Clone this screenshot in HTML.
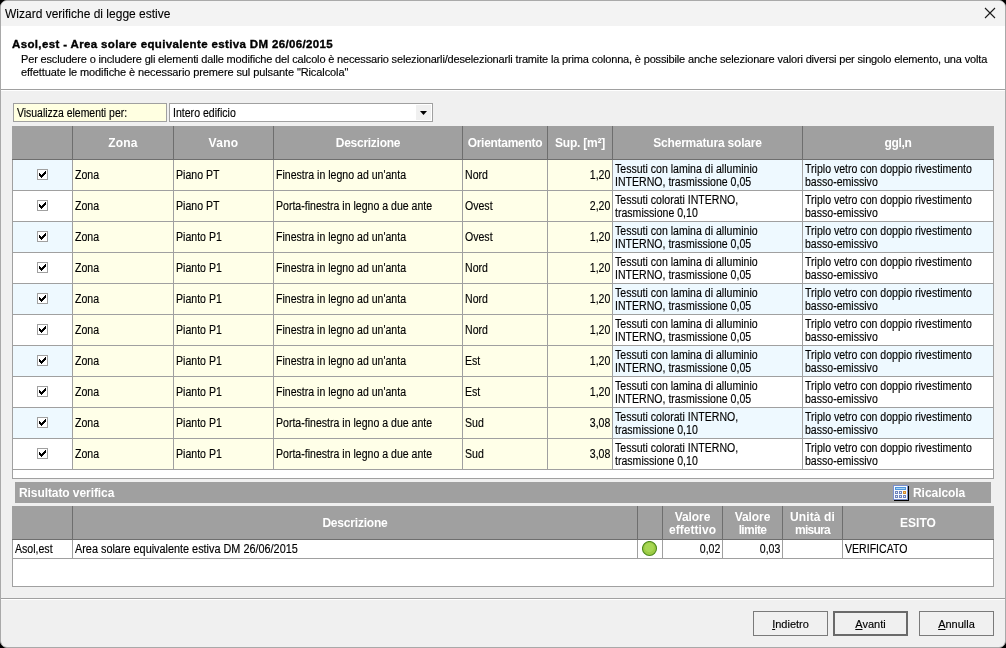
<!DOCTYPE html>
<html><head><meta charset="utf-8"><style>
html,body{margin:0;padding:0;width:1006px;height:648px;overflow:hidden;background:#000;}
.t,.tb,.tt,.hb,.hh,.hh2,.hb2,.bt{will-change:transform;}
body>div,body>svg,#w div{position:absolute;}
div{position:absolute;box-sizing:content-box;}
.t,.tb,.tt,.hb,.hh,.hh2,.hb2,.bt{font-family:"Liberation Sans", sans-serif;white-space:nowrap;color:#000;}
.t{font-size:11px;line-height:13px;letter-spacing:-0.15px;-webkit-text-stroke:0.15px #000;}
.tb{font-size:12px;line-height:13px;-webkit-text-stroke:0.15px #000;}
.tt{font-size:12px;line-height:16px;color:#000;-webkit-text-stroke:0.1px #000;}
.hb{font-size:11.5px;line-height:14px;font-weight:bold;letter-spacing:0.36px;-webkit-text-stroke:0.35px #000;}
.hh{font-size:12px;line-height:14px;font-weight:bold;color:#fff;letter-spacing:-0.15px;}
.hh2{font-size:12px;line-height:13px;font-weight:bold;color:#fff;letter-spacing:-0.15px;}
.hb2{font-size:12px;line-height:14px;font-weight:bold;color:#fff;letter-spacing:0px;}
.bt{font-size:11px;line-height:13px;color:#000;-webkit-text-stroke:0.15px #000;}
u{text-decoration:underline;text-underline-offset:1px;}
</style></head><body>
<div style="left:0;top:0;width:1004px;height:646px;border:1px solid #a9a9a9;border-radius:7px;background:#f0f0f0;overflow:hidden">
</div>
<div style="left:1px;top:1px;width:1004px;height:25px;background:#f3f3f3;border-radius:6px 6px 0 0;"></div>
<div class="tt" style="left:5px;top:6px;">Wizard verifiche di legge estive</div>
<svg style="position:absolute;left:984px;top:7px" width="12" height="12" viewBox="0 0 12 12"><path d="M1 1L11 11M11 1L1 11" stroke="#1a1a1a" stroke-width="1.1" fill="none"/></svg>
<div style="left:1px;top:26px;width:1004px;height:63px;background:#ffffff;"></div>
<div style="left:1px;top:89px;width:1004px;height:1px;background:#a0a0a0;"></div>
<div style="left:1px;top:90px;width:1004px;height:1px;background:#ffffff;"></div>
<div class="hb" style="left:12px;top:37px;">Asol,est - Area solare equivalente estiva DM 26/06/2015</div>
<div class="t" style="left:21px;top:53px;letter-spacing:-0.16px">Per escludere o includere gli elementi dalle modifiche del calcolo è necessario selezionarli/deselezionarli tramite la prima colonna, è possibile anche selezionare valori diversi per singolo elemento, una volta</div>
<div class="t" style="left:21px;top:66px;letter-spacing:-0.1px">effettuate le modifiche è necessario premere sul pulsante "Ricalcola"</div>
<div style="left:13px;top:103px;width:152px;height:17px;background:#ffffe1;border:1px solid #a0a0a0;"></div>
<div class="tb" style="left:17px;top:107px;"><span style="display:inline-block;transform:scaleX(0.87);transform-origin:0 0">Visualizza elementi per:</span></div>
<div style="left:169px;top:103px;width:262px;height:17px;background:#ffffff;border:1px solid #a0a0a0;"></div>
<div class="tb" style="left:173px;top:107px;"><span style="display:inline-block;transform:scaleX(0.88);transform-origin:0 0">Intero edificio</span></div>
<div style="left:416px;top:105px;width:15px;height:15px;background:#f0f0f0;"></div>
<svg style="position:absolute;left:420px;top:111px" width="7" height="4" viewBox="0 0 7 4"><path d="M0 0H7L3.5 4Z" fill="#000"/></svg>
<div style="left:12px;top:126px;width:982px;height:353px;background:#ffffff;box-sizing:border-box;border:1px solid #a0a0a0;border-top:none;"></div>
<div style="left:12px;top:126px;width:982px;height:33px;background:#a0a0a0;"></div>
<div style="left:12px;top:159px;width:982px;height:1px;background:#6e6e6e;"></div>
<div style="left:72px;top:126px;width:1px;height:33px;background:#6e6e6e;"></div>
<div style="left:173px;top:126px;width:1px;height:33px;background:#6e6e6e;"></div>
<div style="left:273px;top:126px;width:1px;height:33px;background:#6e6e6e;"></div>
<div style="left:462px;top:126px;width:1px;height:33px;background:#6e6e6e;"></div>
<div style="left:547px;top:126px;width:1px;height:33px;background:#6e6e6e;"></div>
<div style="left:612px;top:126px;width:1px;height:33px;background:#6e6e6e;"></div>
<div style="left:802px;top:126px;width:1px;height:33px;background:#6e6e6e;"></div>
<div class="hh" style="left:73px;top:136px;width:100px;text-align:center;"><span style="letter-spacing:0.2px">Zona</span></div>
<div class="hh" style="left:174px;top:136px;width:99px;text-align:center;"><span style="letter-spacing:0.28px">Vano</span></div>
<div class="hh" style="left:274px;top:136px;width:188px;text-align:center;"><span style="letter-spacing:-0.27px">Descrizione</span></div>
<div class="hh" style="left:463px;top:136px;width:84px;text-align:center;"><span style="letter-spacing:-0.28px">Orientamento</span></div>
<div class="hh" style="left:548px;top:136px;width:64px;text-align:center;"><span style="letter-spacing:-0.24px">Sup. [m²]</span></div>
<div class="hh" style="left:613px;top:136px;width:189px;text-align:center;"><span style="letter-spacing:-0.2px">Schermatura solare</span></div>
<div class="hh" style="left:803px;top:136px;width:190px;text-align:center;"><span style="letter-spacing:-0.33px">ggl,n</span></div>
<div style="left:13px;top:160px;width:59px;height:30px;background:#eef9ff;"></div>
<div style="left:73px;top:160px;width:539px;height:30px;background:#ffffe8;"></div>
<div style="left:613px;top:160px;width:380px;height:30px;background:#eef9ff;"></div>
<div style="left:13px;top:190px;width:980px;height:1px;background:#a0a0a0;"></div>
<div style="left:72px;top:160px;width:1px;height:30px;background:#a0a0a0;"></div>
<div style="left:173px;top:160px;width:1px;height:30px;background:#a0a0a0;"></div>
<div style="left:273px;top:160px;width:1px;height:30px;background:#a0a0a0;"></div>
<div style="left:462px;top:160px;width:1px;height:30px;background:#a0a0a0;"></div>
<div style="left:547px;top:160px;width:1px;height:30px;background:#a0a0a0;"></div>
<div style="left:612px;top:160px;width:1px;height:30px;background:#a0a0a0;"></div>
<div style="left:802px;top:160px;width:1px;height:30px;background:#a0a0a0;"></div>
<div style="left:37px;top:169px;width:11px;height:11px"><svg width="11" height="11" viewBox="0 0 11 11" shape-rendering="crispEdges" style="position:absolute;left:0;top:0"><rect x="0.5" y="0.5" width="10" height="10" fill="#fff" stroke="#a0a0a0"/><path d="M2 4h1v1h1v1h1v-1h1v-1h1v-1h1v-1h1v3h-1v1h-1v1h-1v1h-1v1h-1v-1h-1v-1h-1z" fill="#000"/></svg></div>
<div class="tb" style="left:75px;top:169px;"><span style="display:inline-block;transform:scaleX(0.88);transform-origin:0 0">Zona</span></div>
<div class="tb" style="left:176px;top:169px;"><span style="display:inline-block;transform:scaleX(0.88);transform-origin:0 0">Piano PT</span></div>
<div class="tb" style="left:276px;top:169px;"><span style="display:inline-block;transform:scaleX(0.88);transform-origin:0 0">Finestra in legno ad un'anta</span></div>
<div class="tb" style="left:465px;top:169px;"><span style="display:inline-block;transform:scaleX(0.88);transform-origin:0 0">Nord</span></div>
<div class="tb" style="left:548px;top:169px;width:62px;text-align:right;"><span style="display:inline-block;transform:scaleX(0.88);transform-origin:100% 0">1,20</span></div>
<div class="tb" style="left:615px;top:163px;"><span style="display:inline-block;transform:scaleX(0.88);transform-origin:0 0">Tessuti con lamina di alluminio<br>INTERNO, trasmissione 0,05</span></div>
<div class="tb" style="left:805px;top:163px;"><span style="display:inline-block;transform:scaleX(0.88);transform-origin:0 0">Triplo vetro con doppio rivestimento<br>basso-emissivo</span></div>
<div style="left:13px;top:191px;width:59px;height:30px;background:#ffffff;"></div>
<div style="left:73px;top:191px;width:539px;height:30px;background:#ffffe8;"></div>
<div style="left:613px;top:191px;width:380px;height:30px;background:#ffffff;"></div>
<div style="left:13px;top:221px;width:980px;height:1px;background:#a0a0a0;"></div>
<div style="left:72px;top:191px;width:1px;height:30px;background:#a0a0a0;"></div>
<div style="left:173px;top:191px;width:1px;height:30px;background:#a0a0a0;"></div>
<div style="left:273px;top:191px;width:1px;height:30px;background:#a0a0a0;"></div>
<div style="left:462px;top:191px;width:1px;height:30px;background:#a0a0a0;"></div>
<div style="left:547px;top:191px;width:1px;height:30px;background:#a0a0a0;"></div>
<div style="left:612px;top:191px;width:1px;height:30px;background:#a0a0a0;"></div>
<div style="left:802px;top:191px;width:1px;height:30px;background:#a0a0a0;"></div>
<div style="left:37px;top:200px;width:11px;height:11px"><svg width="11" height="11" viewBox="0 0 11 11" shape-rendering="crispEdges" style="position:absolute;left:0;top:0"><rect x="0.5" y="0.5" width="10" height="10" fill="#fff" stroke="#a0a0a0"/><path d="M2 4h1v1h1v1h1v-1h1v-1h1v-1h1v-1h1v3h-1v1h-1v1h-1v1h-1v1h-1v-1h-1v-1h-1z" fill="#000"/></svg></div>
<div class="tb" style="left:75px;top:200px;"><span style="display:inline-block;transform:scaleX(0.88);transform-origin:0 0">Zona</span></div>
<div class="tb" style="left:176px;top:200px;"><span style="display:inline-block;transform:scaleX(0.88);transform-origin:0 0">Piano PT</span></div>
<div class="tb" style="left:276px;top:200px;"><span style="display:inline-block;transform:scaleX(0.88);transform-origin:0 0">Porta-finestra in legno a due ante</span></div>
<div class="tb" style="left:465px;top:200px;"><span style="display:inline-block;transform:scaleX(0.88);transform-origin:0 0">Ovest</span></div>
<div class="tb" style="left:548px;top:200px;width:62px;text-align:right;"><span style="display:inline-block;transform:scaleX(0.88);transform-origin:100% 0">2,20</span></div>
<div class="tb" style="left:615px;top:194px;"><span style="display:inline-block;transform:scaleX(0.88);transform-origin:0 0">Tessuti colorati INTERNO,<br>trasmissione 0,10</span></div>
<div class="tb" style="left:805px;top:194px;"><span style="display:inline-block;transform:scaleX(0.88);transform-origin:0 0">Triplo vetro con doppio rivestimento<br>basso-emissivo</span></div>
<div style="left:13px;top:222px;width:59px;height:30px;background:#eef9ff;"></div>
<div style="left:73px;top:222px;width:539px;height:30px;background:#ffffe8;"></div>
<div style="left:613px;top:222px;width:380px;height:30px;background:#eef9ff;"></div>
<div style="left:13px;top:252px;width:980px;height:1px;background:#a0a0a0;"></div>
<div style="left:72px;top:222px;width:1px;height:30px;background:#a0a0a0;"></div>
<div style="left:173px;top:222px;width:1px;height:30px;background:#a0a0a0;"></div>
<div style="left:273px;top:222px;width:1px;height:30px;background:#a0a0a0;"></div>
<div style="left:462px;top:222px;width:1px;height:30px;background:#a0a0a0;"></div>
<div style="left:547px;top:222px;width:1px;height:30px;background:#a0a0a0;"></div>
<div style="left:612px;top:222px;width:1px;height:30px;background:#a0a0a0;"></div>
<div style="left:802px;top:222px;width:1px;height:30px;background:#a0a0a0;"></div>
<div style="left:37px;top:231px;width:11px;height:11px"><svg width="11" height="11" viewBox="0 0 11 11" shape-rendering="crispEdges" style="position:absolute;left:0;top:0"><rect x="0.5" y="0.5" width="10" height="10" fill="#fff" stroke="#a0a0a0"/><path d="M2 4h1v1h1v1h1v-1h1v-1h1v-1h1v-1h1v3h-1v1h-1v1h-1v1h-1v1h-1v-1h-1v-1h-1z" fill="#000"/></svg></div>
<div class="tb" style="left:75px;top:231px;"><span style="display:inline-block;transform:scaleX(0.88);transform-origin:0 0">Zona</span></div>
<div class="tb" style="left:176px;top:231px;"><span style="display:inline-block;transform:scaleX(0.88);transform-origin:0 0">Pianto P1</span></div>
<div class="tb" style="left:276px;top:231px;"><span style="display:inline-block;transform:scaleX(0.88);transform-origin:0 0">Finestra in legno ad un'anta</span></div>
<div class="tb" style="left:465px;top:231px;"><span style="display:inline-block;transform:scaleX(0.88);transform-origin:0 0">Ovest</span></div>
<div class="tb" style="left:548px;top:231px;width:62px;text-align:right;"><span style="display:inline-block;transform:scaleX(0.88);transform-origin:100% 0">1,20</span></div>
<div class="tb" style="left:615px;top:225px;"><span style="display:inline-block;transform:scaleX(0.88);transform-origin:0 0">Tessuti con lamina di alluminio<br>INTERNO, trasmissione 0,05</span></div>
<div class="tb" style="left:805px;top:225px;"><span style="display:inline-block;transform:scaleX(0.88);transform-origin:0 0">Triplo vetro con doppio rivestimento<br>basso-emissivo</span></div>
<div style="left:13px;top:253px;width:59px;height:30px;background:#ffffff;"></div>
<div style="left:73px;top:253px;width:539px;height:30px;background:#ffffe8;"></div>
<div style="left:613px;top:253px;width:380px;height:30px;background:#ffffff;"></div>
<div style="left:13px;top:283px;width:980px;height:1px;background:#a0a0a0;"></div>
<div style="left:72px;top:253px;width:1px;height:30px;background:#a0a0a0;"></div>
<div style="left:173px;top:253px;width:1px;height:30px;background:#a0a0a0;"></div>
<div style="left:273px;top:253px;width:1px;height:30px;background:#a0a0a0;"></div>
<div style="left:462px;top:253px;width:1px;height:30px;background:#a0a0a0;"></div>
<div style="left:547px;top:253px;width:1px;height:30px;background:#a0a0a0;"></div>
<div style="left:612px;top:253px;width:1px;height:30px;background:#a0a0a0;"></div>
<div style="left:802px;top:253px;width:1px;height:30px;background:#a0a0a0;"></div>
<div style="left:37px;top:262px;width:11px;height:11px"><svg width="11" height="11" viewBox="0 0 11 11" shape-rendering="crispEdges" style="position:absolute;left:0;top:0"><rect x="0.5" y="0.5" width="10" height="10" fill="#fff" stroke="#a0a0a0"/><path d="M2 4h1v1h1v1h1v-1h1v-1h1v-1h1v-1h1v3h-1v1h-1v1h-1v1h-1v1h-1v-1h-1v-1h-1z" fill="#000"/></svg></div>
<div class="tb" style="left:75px;top:262px;"><span style="display:inline-block;transform:scaleX(0.88);transform-origin:0 0">Zona</span></div>
<div class="tb" style="left:176px;top:262px;"><span style="display:inline-block;transform:scaleX(0.88);transform-origin:0 0">Pianto P1</span></div>
<div class="tb" style="left:276px;top:262px;"><span style="display:inline-block;transform:scaleX(0.88);transform-origin:0 0">Finestra in legno ad un'anta</span></div>
<div class="tb" style="left:465px;top:262px;"><span style="display:inline-block;transform:scaleX(0.88);transform-origin:0 0">Nord</span></div>
<div class="tb" style="left:548px;top:262px;width:62px;text-align:right;"><span style="display:inline-block;transform:scaleX(0.88);transform-origin:100% 0">1,20</span></div>
<div class="tb" style="left:615px;top:256px;"><span style="display:inline-block;transform:scaleX(0.88);transform-origin:0 0">Tessuti con lamina di alluminio<br>INTERNO, trasmissione 0,05</span></div>
<div class="tb" style="left:805px;top:256px;"><span style="display:inline-block;transform:scaleX(0.88);transform-origin:0 0">Triplo vetro con doppio rivestimento<br>basso-emissivo</span></div>
<div style="left:13px;top:284px;width:59px;height:30px;background:#eef9ff;"></div>
<div style="left:73px;top:284px;width:539px;height:30px;background:#ffffe8;"></div>
<div style="left:613px;top:284px;width:380px;height:30px;background:#eef9ff;"></div>
<div style="left:13px;top:314px;width:980px;height:1px;background:#a0a0a0;"></div>
<div style="left:72px;top:284px;width:1px;height:30px;background:#a0a0a0;"></div>
<div style="left:173px;top:284px;width:1px;height:30px;background:#a0a0a0;"></div>
<div style="left:273px;top:284px;width:1px;height:30px;background:#a0a0a0;"></div>
<div style="left:462px;top:284px;width:1px;height:30px;background:#a0a0a0;"></div>
<div style="left:547px;top:284px;width:1px;height:30px;background:#a0a0a0;"></div>
<div style="left:612px;top:284px;width:1px;height:30px;background:#a0a0a0;"></div>
<div style="left:802px;top:284px;width:1px;height:30px;background:#a0a0a0;"></div>
<div style="left:37px;top:293px;width:11px;height:11px"><svg width="11" height="11" viewBox="0 0 11 11" shape-rendering="crispEdges" style="position:absolute;left:0;top:0"><rect x="0.5" y="0.5" width="10" height="10" fill="#fff" stroke="#a0a0a0"/><path d="M2 4h1v1h1v1h1v-1h1v-1h1v-1h1v-1h1v3h-1v1h-1v1h-1v1h-1v1h-1v-1h-1v-1h-1z" fill="#000"/></svg></div>
<div class="tb" style="left:75px;top:293px;"><span style="display:inline-block;transform:scaleX(0.88);transform-origin:0 0">Zona</span></div>
<div class="tb" style="left:176px;top:293px;"><span style="display:inline-block;transform:scaleX(0.88);transform-origin:0 0">Pianto P1</span></div>
<div class="tb" style="left:276px;top:293px;"><span style="display:inline-block;transform:scaleX(0.88);transform-origin:0 0">Finestra in legno ad un'anta</span></div>
<div class="tb" style="left:465px;top:293px;"><span style="display:inline-block;transform:scaleX(0.88);transform-origin:0 0">Nord</span></div>
<div class="tb" style="left:548px;top:293px;width:62px;text-align:right;"><span style="display:inline-block;transform:scaleX(0.88);transform-origin:100% 0">1,20</span></div>
<div class="tb" style="left:615px;top:287px;"><span style="display:inline-block;transform:scaleX(0.88);transform-origin:0 0">Tessuti con lamina di alluminio<br>INTERNO, trasmissione 0,05</span></div>
<div class="tb" style="left:805px;top:287px;"><span style="display:inline-block;transform:scaleX(0.88);transform-origin:0 0">Triplo vetro con doppio rivestimento<br>basso-emissivo</span></div>
<div style="left:13px;top:315px;width:59px;height:30px;background:#ffffff;"></div>
<div style="left:73px;top:315px;width:539px;height:30px;background:#ffffe8;"></div>
<div style="left:613px;top:315px;width:380px;height:30px;background:#ffffff;"></div>
<div style="left:13px;top:345px;width:980px;height:1px;background:#a0a0a0;"></div>
<div style="left:72px;top:315px;width:1px;height:30px;background:#a0a0a0;"></div>
<div style="left:173px;top:315px;width:1px;height:30px;background:#a0a0a0;"></div>
<div style="left:273px;top:315px;width:1px;height:30px;background:#a0a0a0;"></div>
<div style="left:462px;top:315px;width:1px;height:30px;background:#a0a0a0;"></div>
<div style="left:547px;top:315px;width:1px;height:30px;background:#a0a0a0;"></div>
<div style="left:612px;top:315px;width:1px;height:30px;background:#a0a0a0;"></div>
<div style="left:802px;top:315px;width:1px;height:30px;background:#a0a0a0;"></div>
<div style="left:37px;top:324px;width:11px;height:11px"><svg width="11" height="11" viewBox="0 0 11 11" shape-rendering="crispEdges" style="position:absolute;left:0;top:0"><rect x="0.5" y="0.5" width="10" height="10" fill="#fff" stroke="#a0a0a0"/><path d="M2 4h1v1h1v1h1v-1h1v-1h1v-1h1v-1h1v3h-1v1h-1v1h-1v1h-1v1h-1v-1h-1v-1h-1z" fill="#000"/></svg></div>
<div class="tb" style="left:75px;top:324px;"><span style="display:inline-block;transform:scaleX(0.88);transform-origin:0 0">Zona</span></div>
<div class="tb" style="left:176px;top:324px;"><span style="display:inline-block;transform:scaleX(0.88);transform-origin:0 0">Pianto P1</span></div>
<div class="tb" style="left:276px;top:324px;"><span style="display:inline-block;transform:scaleX(0.88);transform-origin:0 0">Finestra in legno ad un'anta</span></div>
<div class="tb" style="left:465px;top:324px;"><span style="display:inline-block;transform:scaleX(0.88);transform-origin:0 0">Nord</span></div>
<div class="tb" style="left:548px;top:324px;width:62px;text-align:right;"><span style="display:inline-block;transform:scaleX(0.88);transform-origin:100% 0">1,20</span></div>
<div class="tb" style="left:615px;top:318px;"><span style="display:inline-block;transform:scaleX(0.88);transform-origin:0 0">Tessuti con lamina di alluminio<br>INTERNO, trasmissione 0,05</span></div>
<div class="tb" style="left:805px;top:318px;"><span style="display:inline-block;transform:scaleX(0.88);transform-origin:0 0">Triplo vetro con doppio rivestimento<br>basso-emissivo</span></div>
<div style="left:13px;top:346px;width:59px;height:30px;background:#eef9ff;"></div>
<div style="left:73px;top:346px;width:539px;height:30px;background:#ffffe8;"></div>
<div style="left:613px;top:346px;width:380px;height:30px;background:#eef9ff;"></div>
<div style="left:13px;top:376px;width:980px;height:1px;background:#a0a0a0;"></div>
<div style="left:72px;top:346px;width:1px;height:30px;background:#a0a0a0;"></div>
<div style="left:173px;top:346px;width:1px;height:30px;background:#a0a0a0;"></div>
<div style="left:273px;top:346px;width:1px;height:30px;background:#a0a0a0;"></div>
<div style="left:462px;top:346px;width:1px;height:30px;background:#a0a0a0;"></div>
<div style="left:547px;top:346px;width:1px;height:30px;background:#a0a0a0;"></div>
<div style="left:612px;top:346px;width:1px;height:30px;background:#a0a0a0;"></div>
<div style="left:802px;top:346px;width:1px;height:30px;background:#a0a0a0;"></div>
<div style="left:37px;top:355px;width:11px;height:11px"><svg width="11" height="11" viewBox="0 0 11 11" shape-rendering="crispEdges" style="position:absolute;left:0;top:0"><rect x="0.5" y="0.5" width="10" height="10" fill="#fff" stroke="#a0a0a0"/><path d="M2 4h1v1h1v1h1v-1h1v-1h1v-1h1v-1h1v3h-1v1h-1v1h-1v1h-1v1h-1v-1h-1v-1h-1z" fill="#000"/></svg></div>
<div class="tb" style="left:75px;top:355px;"><span style="display:inline-block;transform:scaleX(0.88);transform-origin:0 0">Zona</span></div>
<div class="tb" style="left:176px;top:355px;"><span style="display:inline-block;transform:scaleX(0.88);transform-origin:0 0">Pianto P1</span></div>
<div class="tb" style="left:276px;top:355px;"><span style="display:inline-block;transform:scaleX(0.88);transform-origin:0 0">Finestra in legno ad un'anta</span></div>
<div class="tb" style="left:465px;top:355px;"><span style="display:inline-block;transform:scaleX(0.88);transform-origin:0 0">Est</span></div>
<div class="tb" style="left:548px;top:355px;width:62px;text-align:right;"><span style="display:inline-block;transform:scaleX(0.88);transform-origin:100% 0">1,20</span></div>
<div class="tb" style="left:615px;top:349px;"><span style="display:inline-block;transform:scaleX(0.88);transform-origin:0 0">Tessuti con lamina di alluminio<br>INTERNO, trasmissione 0,05</span></div>
<div class="tb" style="left:805px;top:349px;"><span style="display:inline-block;transform:scaleX(0.88);transform-origin:0 0">Triplo vetro con doppio rivestimento<br>basso-emissivo</span></div>
<div style="left:13px;top:377px;width:59px;height:30px;background:#ffffff;"></div>
<div style="left:73px;top:377px;width:539px;height:30px;background:#ffffe8;"></div>
<div style="left:613px;top:377px;width:380px;height:30px;background:#ffffff;"></div>
<div style="left:13px;top:407px;width:980px;height:1px;background:#a0a0a0;"></div>
<div style="left:72px;top:377px;width:1px;height:30px;background:#a0a0a0;"></div>
<div style="left:173px;top:377px;width:1px;height:30px;background:#a0a0a0;"></div>
<div style="left:273px;top:377px;width:1px;height:30px;background:#a0a0a0;"></div>
<div style="left:462px;top:377px;width:1px;height:30px;background:#a0a0a0;"></div>
<div style="left:547px;top:377px;width:1px;height:30px;background:#a0a0a0;"></div>
<div style="left:612px;top:377px;width:1px;height:30px;background:#a0a0a0;"></div>
<div style="left:802px;top:377px;width:1px;height:30px;background:#a0a0a0;"></div>
<div style="left:37px;top:386px;width:11px;height:11px"><svg width="11" height="11" viewBox="0 0 11 11" shape-rendering="crispEdges" style="position:absolute;left:0;top:0"><rect x="0.5" y="0.5" width="10" height="10" fill="#fff" stroke="#a0a0a0"/><path d="M2 4h1v1h1v1h1v-1h1v-1h1v-1h1v-1h1v3h-1v1h-1v1h-1v1h-1v1h-1v-1h-1v-1h-1z" fill="#000"/></svg></div>
<div class="tb" style="left:75px;top:386px;"><span style="display:inline-block;transform:scaleX(0.88);transform-origin:0 0">Zona</span></div>
<div class="tb" style="left:176px;top:386px;"><span style="display:inline-block;transform:scaleX(0.88);transform-origin:0 0">Pianto P1</span></div>
<div class="tb" style="left:276px;top:386px;"><span style="display:inline-block;transform:scaleX(0.88);transform-origin:0 0">Finestra in legno ad un'anta</span></div>
<div class="tb" style="left:465px;top:386px;"><span style="display:inline-block;transform:scaleX(0.88);transform-origin:0 0">Est</span></div>
<div class="tb" style="left:548px;top:386px;width:62px;text-align:right;"><span style="display:inline-block;transform:scaleX(0.88);transform-origin:100% 0">1,20</span></div>
<div class="tb" style="left:615px;top:380px;"><span style="display:inline-block;transform:scaleX(0.88);transform-origin:0 0">Tessuti con lamina di alluminio<br>INTERNO, trasmissione 0,05</span></div>
<div class="tb" style="left:805px;top:380px;"><span style="display:inline-block;transform:scaleX(0.88);transform-origin:0 0">Triplo vetro con doppio rivestimento<br>basso-emissivo</span></div>
<div style="left:13px;top:408px;width:59px;height:30px;background:#eef9ff;"></div>
<div style="left:73px;top:408px;width:539px;height:30px;background:#ffffe8;"></div>
<div style="left:613px;top:408px;width:380px;height:30px;background:#eef9ff;"></div>
<div style="left:13px;top:438px;width:980px;height:1px;background:#a0a0a0;"></div>
<div style="left:72px;top:408px;width:1px;height:30px;background:#a0a0a0;"></div>
<div style="left:173px;top:408px;width:1px;height:30px;background:#a0a0a0;"></div>
<div style="left:273px;top:408px;width:1px;height:30px;background:#a0a0a0;"></div>
<div style="left:462px;top:408px;width:1px;height:30px;background:#a0a0a0;"></div>
<div style="left:547px;top:408px;width:1px;height:30px;background:#a0a0a0;"></div>
<div style="left:612px;top:408px;width:1px;height:30px;background:#a0a0a0;"></div>
<div style="left:802px;top:408px;width:1px;height:30px;background:#a0a0a0;"></div>
<div style="left:37px;top:417px;width:11px;height:11px"><svg width="11" height="11" viewBox="0 0 11 11" shape-rendering="crispEdges" style="position:absolute;left:0;top:0"><rect x="0.5" y="0.5" width="10" height="10" fill="#fff" stroke="#a0a0a0"/><path d="M2 4h1v1h1v1h1v-1h1v-1h1v-1h1v-1h1v3h-1v1h-1v1h-1v1h-1v1h-1v-1h-1v-1h-1z" fill="#000"/></svg></div>
<div class="tb" style="left:75px;top:417px;"><span style="display:inline-block;transform:scaleX(0.88);transform-origin:0 0">Zona</span></div>
<div class="tb" style="left:176px;top:417px;"><span style="display:inline-block;transform:scaleX(0.88);transform-origin:0 0">Pianto P1</span></div>
<div class="tb" style="left:276px;top:417px;"><span style="display:inline-block;transform:scaleX(0.88);transform-origin:0 0">Porta-finestra in legno a due ante</span></div>
<div class="tb" style="left:465px;top:417px;"><span style="display:inline-block;transform:scaleX(0.88);transform-origin:0 0">Sud</span></div>
<div class="tb" style="left:548px;top:417px;width:62px;text-align:right;"><span style="display:inline-block;transform:scaleX(0.88);transform-origin:100% 0">3,08</span></div>
<div class="tb" style="left:615px;top:411px;"><span style="display:inline-block;transform:scaleX(0.88);transform-origin:0 0">Tessuti colorati INTERNO,<br>trasmissione 0,10</span></div>
<div class="tb" style="left:805px;top:411px;"><span style="display:inline-block;transform:scaleX(0.88);transform-origin:0 0">Triplo vetro con doppio rivestimento<br>basso-emissivo</span></div>
<div style="left:13px;top:439px;width:59px;height:30px;background:#ffffff;"></div>
<div style="left:73px;top:439px;width:539px;height:30px;background:#ffffe8;"></div>
<div style="left:613px;top:439px;width:380px;height:30px;background:#ffffff;"></div>
<div style="left:13px;top:469px;width:980px;height:1px;background:#a0a0a0;"></div>
<div style="left:72px;top:439px;width:1px;height:30px;background:#a0a0a0;"></div>
<div style="left:173px;top:439px;width:1px;height:30px;background:#a0a0a0;"></div>
<div style="left:273px;top:439px;width:1px;height:30px;background:#a0a0a0;"></div>
<div style="left:462px;top:439px;width:1px;height:30px;background:#a0a0a0;"></div>
<div style="left:547px;top:439px;width:1px;height:30px;background:#a0a0a0;"></div>
<div style="left:612px;top:439px;width:1px;height:30px;background:#a0a0a0;"></div>
<div style="left:802px;top:439px;width:1px;height:30px;background:#a0a0a0;"></div>
<div style="left:37px;top:448px;width:11px;height:11px"><svg width="11" height="11" viewBox="0 0 11 11" shape-rendering="crispEdges" style="position:absolute;left:0;top:0"><rect x="0.5" y="0.5" width="10" height="10" fill="#fff" stroke="#a0a0a0"/><path d="M2 4h1v1h1v1h1v-1h1v-1h1v-1h1v-1h1v3h-1v1h-1v1h-1v1h-1v1h-1v-1h-1v-1h-1z" fill="#000"/></svg></div>
<div class="tb" style="left:75px;top:448px;"><span style="display:inline-block;transform:scaleX(0.88);transform-origin:0 0">Zona</span></div>
<div class="tb" style="left:176px;top:448px;"><span style="display:inline-block;transform:scaleX(0.88);transform-origin:0 0">Pianto P1</span></div>
<div class="tb" style="left:276px;top:448px;"><span style="display:inline-block;transform:scaleX(0.88);transform-origin:0 0">Porta-finestra in legno a due ante</span></div>
<div class="tb" style="left:465px;top:448px;"><span style="display:inline-block;transform:scaleX(0.88);transform-origin:0 0">Sud</span></div>
<div class="tb" style="left:548px;top:448px;width:62px;text-align:right;"><span style="display:inline-block;transform:scaleX(0.88);transform-origin:100% 0">3,08</span></div>
<div class="tb" style="left:615px;top:442px;"><span style="display:inline-block;transform:scaleX(0.88);transform-origin:0 0">Tessuti colorati INTERNO,<br>trasmissione 0,10</span></div>
<div class="tb" style="left:805px;top:442px;"><span style="display:inline-block;transform:scaleX(0.88);transform-origin:0 0">Triplo vetro con doppio rivestimento<br>basso-emissivo</span></div>
<div style="left:15px;top:482px;width:976px;height:21px;background:#a0a0a0;"></div>
<div class="hb2" style="left:19px;top:486px;"><span style="letter-spacing:-0.08px">Risultato verifica</span></div>
<svg style="position:absolute;left:893px;top:485px" width="16" height="16" viewBox="0 0 16 16" shape-rendering="crispEdges">
<rect x="1" y="1" width="15" height="15" fill="#000"/>
<rect x="0" y="0" width="15" height="15" fill="#7b8fcc"/>
<rect x="1" y="1" width="13" height="13" fill="#f7f9fe"/>
<rect x="2" y="2" width="11" height="3" fill="#4f95dc"/>
<rect x="3" y="3" width="9" height="1" fill="#a6d2f5"/>
<g fill="#6f83bd"><rect x="2" y="6" width="3" height="3"/><rect x="6" y="6" width="3" height="3"/><rect x="2" y="10" width="3" height="3"/><rect x="6" y="10" width="3" height="3"/><rect x="10" y="10" width="3" height="3"/></g>
<rect x="10" y="6" width="3" height="3" fill="#d38a2e"/>
<g fill="#e8ecf8"><rect x="3" y="7" width="1" height="1"/><rect x="7" y="7" width="1" height="1"/><rect x="3" y="11" width="1" height="1"/><rect x="7" y="11" width="1" height="1"/><rect x="11" y="11" width="1" height="1"/></g>
<rect x="11" y="7" width="1" height="1" fill="#f7d27a"/>
</svg>
<div class="hb2" style="left:913px;top:486px;"><span style="letter-spacing:-0.05px">Ricalcola</span></div>
<div style="left:12px;top:506px;width:982px;height:81px;background:#ffffff;box-sizing:border-box;border:1px solid #a0a0a0;border-top:none;"></div>
<div style="left:12px;top:506px;width:982px;height:33px;background:#a0a0a0;"></div>
<div style="left:12px;top:539px;width:982px;height:1px;background:#6e6e6e;"></div>
<div style="left:72px;top:506px;width:1px;height:33px;background:#6e6e6e;"></div>
<div style="left:72px;top:540px;width:1px;height:18px;background:#a0a0a0;"></div>
<div style="left:637px;top:506px;width:1px;height:33px;background:#6e6e6e;"></div>
<div style="left:637px;top:540px;width:1px;height:18px;background:#a0a0a0;"></div>
<div style="left:662px;top:506px;width:1px;height:33px;background:#6e6e6e;"></div>
<div style="left:662px;top:540px;width:1px;height:18px;background:#a0a0a0;"></div>
<div style="left:722px;top:506px;width:1px;height:33px;background:#6e6e6e;"></div>
<div style="left:722px;top:540px;width:1px;height:18px;background:#a0a0a0;"></div>
<div style="left:782px;top:506px;width:1px;height:33px;background:#6e6e6e;"></div>
<div style="left:782px;top:540px;width:1px;height:18px;background:#a0a0a0;"></div>
<div style="left:842px;top:506px;width:1px;height:33px;background:#6e6e6e;"></div>
<div style="left:842px;top:540px;width:1px;height:18px;background:#a0a0a0;"></div>
<div style="left:13px;top:558px;width:980px;height:1px;background:#a0a0a0;"></div>
<div class="hh" style="left:73px;top:516px;width:564px;text-align:center;"><span style="letter-spacing:-0.2px">Descrizione</span></div>
<div class="hh2" style="left:663px;top:511px;width:59px;text-align:center;"><span style="letter-spacing:-0.05px">Valore</span><br><span style="letter-spacing:0.05px">effettivo</span></div>
<div class="hh2" style="left:723px;top:511px;width:59px;text-align:center;"><span style="letter-spacing:-0.05px">Valore</span><br><span style="letter-spacing:-0.6px">limite</span></div>
<div class="hh2" style="left:783px;top:511px;width:59px;text-align:center;"><span style="letter-spacing:0.1px">Unità di</span><br><span style="letter-spacing:-0.75px">misura</span></div>
<div class="hh" style="left:843px;top:516px;width:150px;text-align:center;"><span style="letter-spacing:0.0px">ESITO</span></div>
<div class="tb" style="left:15px;top:543px;"><span style="display:inline-block;transform:scaleX(0.88);transform-origin:0 0">Asol,est</span></div>
<div class="tb" style="left:75px;top:543px;"><span style="display:inline-block;transform:scaleX(0.905);transform-origin:0 0">Area solare equivalente estiva DM 26/06/2015</span></div>
<svg style="position:absolute;left:642px;top:541px" width="16" height="16" viewBox="0 0 16 16"><circle cx="7.5" cy="7.5" r="7" fill="#9ccb45" stroke="#4d8a1c" stroke-width="1.1"/><circle cx="7.3" cy="6.6" r="4.6" fill="#addb5a" opacity="0.7"/></svg>
<div class="tb" style="left:663px;top:543px;width:57px;text-align:right;"><span style="display:inline-block;transform:scaleX(0.88);transform-origin:100% 0">0,02</span></div>
<div class="tb" style="left:723px;top:543px;width:57px;text-align:right;"><span style="display:inline-block;transform:scaleX(0.88);transform-origin:100% 0">0,03</span></div>
<div class="tb" style="left:845px;top:543px;"><span style="display:inline-block;transform:scaleX(0.88);transform-origin:0 0">VERIFICATO</span></div>
<div style="left:1px;top:598px;width:1004px;height:1px;background:#a0a0a0;"></div>
<div style="left:1px;top:599px;width:1004px;height:1px;background:#ffffff;"></div>
<div style="left:753px;top:611px;width:73px;height:23px;border:1px solid #7a7a7a;background:#f0f0f0"></div>
<div class="bt" style="left:753px;top:618px;width:75px;text-align:center;"><u>I</u>ndietro</div>
<div style="left:833px;top:611px;width:71px;height:21px;border:2px solid #6a6a6a;background:#f0f0f0"></div>
<div class="bt" style="left:833px;top:618px;width:75px;text-align:center;"><u>A</u>vanti</div>
<div style="left:919px;top:611px;width:73px;height:23px;border:1px solid #7a7a7a;background:#f0f0f0"></div>
<div class="bt" style="left:919px;top:618px;width:75px;text-align:center;"><u>A</u>nnulla</div>
</body></html>
